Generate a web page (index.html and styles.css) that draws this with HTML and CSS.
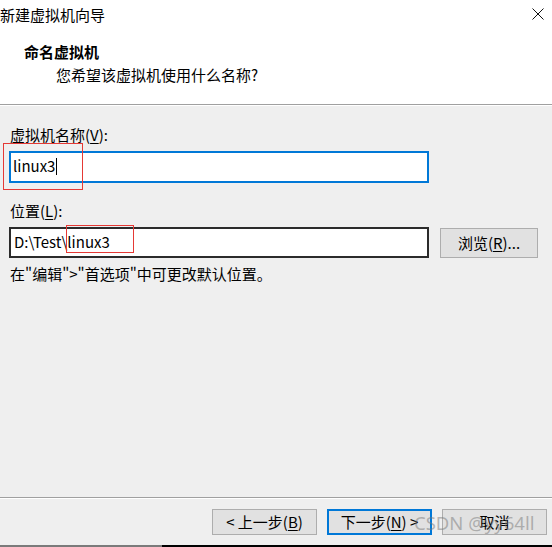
FILE: index.html
```html
<!DOCTYPE html>
<html lang="zh-CN">
<head>
<meta charset="utf-8">
<link rel="stylesheet" href="styles.css">
</head>
<body>
<div class="window">
  <div class="header">
    <div class="titlebar">
      <span class="title">新建虚拟机向导</span>
      <svg class="close" width="12" height="12" viewBox="0 0 12 12"><path d="M0.5 0.5 L11.5 11.5 M11.5 0.5 L0.5 11.5" stroke="#111" stroke-width="1" fill="none"/></svg>
    </div>
    <div class="heading">命名虚拟机</div>
    <div class="subheading">您希望该虚拟机使用什么名称?</div>
  </div>
  <div class="content">
    <div class="label">虚拟机名称(<u>V</u>):</div>
    <div class="input focused"><span>linux3</span><span class="caret"></span></div>
    <div class="label second">位置(<u>L</u>):</div>
    <div class="row">
      <div class="input path">D:\Test\linux3</div>
      <div class="btn browse">浏览(<u>R</u>)...</div>
    </div>
    <div class="hint">在"编辑"&gt;"首选项"中可更改默认位置。</div>
  </div>
  <div class="footer">
    <div class="buttons">
      <div class="btn">&lt; 上一步(<u>B</u>)</div>
      <div class="btn primary">下一步(<u>N</u>) &gt;</div>
      <div class="btn">取消</div>
    </div>
    <div class="bottomstrip"><div class="strip-gray"></div><div class="strip-black"></div></div>
  </div>
  <div class="mark mark1"></div>
  <div class="mark mark2"></div>
  <div class="watermark">CSDN @yy64ll</div>
</div>
</body>
</html>
```
FILE: styles.css
```css
* { box-sizing: border-box; }
html, body { margin: 0; padding: 0; }
body {
  width: 552px;
  height: 547px;
  overflow: hidden;
  background: #efefef;
  font-family: "Noto Sans CJK SC", "Noto Sans", sans-serif;
  font-size: 15px;
  color: #000;
}
.window {
  position: relative;
  width: 552px;
  height: 547px;
  display: flex;
  flex-direction: column;
}
.header {
  height: 105px;
  background: #fff;
  border-bottom: 1px solid #a0a0a0;
  flex: none;
}
.titlebar {
  height: 34px;
  display: flex;
  align-items: flex-start;
  justify-content: space-between;
  padding: 4px 8px 0 0;
}
.title {
  line-height: 22px;
  font-size: 15px;
  color: #000;
}
.close { margin-top: 4px; }
.heading {
  padding-left: 24px;
  font-weight: bold;
  line-height: 22px;
  margin-top: 7px;
}
.subheading {
  padding-left: 56px;
  line-height: 22px;
  margin-top: 1px;
}
.content {
  flex: 1;
  padding: 19px 14px 0 9px;
  border-top: 1px solid #fff;
}
.label {
  line-height: 20px;
  padding-left: 1px;
}
.label.second { margin-top: 18px; }
u { text-decoration: underline; text-underline-offset: 2px; }
.input {
  margin-top: 6px;
  width: 420px;
  height: 32px;
  background: #fff;
  border: 1px solid #0078d7;
  padding: 0 0 2px 4px;
  display: flex;
  align-items: center;
  line-height: 20px;
}
.input.focused { border-width: 2px; padding-left: 2px; }
.caret {
  display: inline-block;
  width: 1px;
  height: 17px;
  background: #000;
  margin-left: 1px;
}
.row {
  margin-top: 6px;
  display: flex;
  align-items: center;
  gap: 11px;
}
.input.path {
  margin-top: 0;
  height: 31px;
  border: 2px solid #2b2b2b;
  padding-left: 3px;
}
.btn {
  background: #e1e1e1;
  border: 1px solid #adadad;
  display: flex;
  align-items: center;
  justify-content: center;
  line-height: 20px;
}
.browse {
  width: 98px;
  height: 30px;
}
.hint {
  margin-top: 5px;
  line-height: 22px;
  padding-left: 1px;
}
.footer {
  flex: none;
  height: 50px;
  border-top: 1px solid #a0a0a0;
  display: flex;
  flex-direction: column;
}
.buttons {
  flex: 1;
  border-top: 1px solid #fff;
  display: flex;
  justify-content: flex-end;
  align-items: flex-start;
  padding: 10px 5px 0 0;
  gap: 10px;
}
.buttons .btn {
  width: 105px;
  height: 26px;
}
.buttons .btn.primary {
  border: 2px solid #0078d7;
}
.bottomstrip {
  height: 2px;
  display: flex;
}
.strip-gray { width: 162px; background: #7a7a7a; }
.strip-black { flex: 1; background: #000; }
.mark {
  position: absolute;
  border: 1px solid #e53935;
}
.mark1 { left: 3px; top: 143px; width: 80px; height: 47px; }
.mark2 { left: 66px; top: 225px; width: 68px; height: 28px; }
.watermark {
  position: absolute;
  left: 414px;
  top: 510px;
  font-family: "Noto Sans", sans-serif;
  font-size: 18.5px;
  color: rgba(120, 120, 120, 0.5);
}
```
